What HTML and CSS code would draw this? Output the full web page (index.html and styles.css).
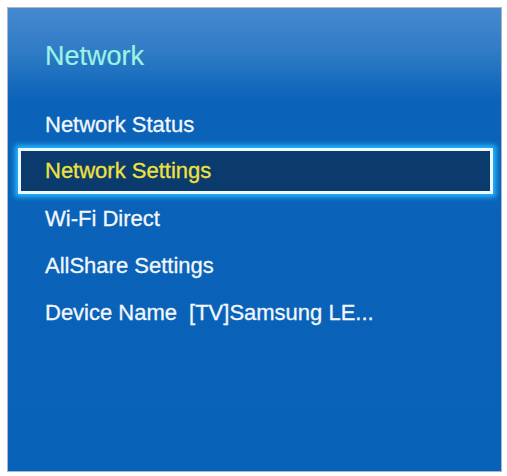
FILE: index.html
```
<!DOCTYPE html>
<html lang="en">
  <head>
    <meta charset="utf-8">
    <title>Network</title>
    <link rel="stylesheet" href="styles.css">
  </head>
  <body>
    <div class="panel">
      <h1 class="title">Network</h1>
      <ul class="menu">
        <li>Network Status</li>
        <li class="selected">Network Settings</li>
        <li>Wi-Fi Direct</li>
        <li>AllShare Settings</li>
        <li>Device Name<span class="value">[TV]Samsung LE...</span></li>
      </ul>
    </div>
  </body>
</html>
```
FILE: styles.css
```
body {
  margin: 0;
  padding: 7px 5px 4px 7px;
  background-color: #ffffff;
  font-family: "Liberation Sans", Arial, sans-serif;
}
.panel {
  box-sizing: border-box;
  height: 465px;
  border: 1px solid #a7b7c8;
  background: linear-gradient(#4689cf 0, #2e7bc5 45px, #0b63b9 92px, #0862b8 100%);
  color: #f3f7fb;
}
.title {
  box-sizing: border-box;
  height: 93px;
  margin: 0;
  padding: 4px 0 0 37px;
  display: flex;
  align-items: center;
  font-size: 27px;
  font-weight: normal;
  color: #9cf3e4;
  -webkit-text-stroke: 0.2px #9cf3e4;
}
.menu {
  margin: 0;
  padding: 0;
  list-style: none;
}
.menu li {
  box-sizing: border-box;
  height: 47px;
  padding-left: 37px;
  display: flex;
  align-items: center;
  font-size: 22px;
  -webkit-text-stroke: 0.3px #f3f7fb;
  &.selected {
    height: 46px;
    margin: 0 8px 1px 10px;
    padding-left: 24px;
    border: 3px solid #eaf8ff;
    background-color: #0b3a6d;
    box-shadow: 0 0 5px 3px #27b6ff;
    color: #f0e23c;
    -webkit-text-stroke: 0.3px #f0e23c;
  }
}
.value {
  margin-left: 12px;
}
```
